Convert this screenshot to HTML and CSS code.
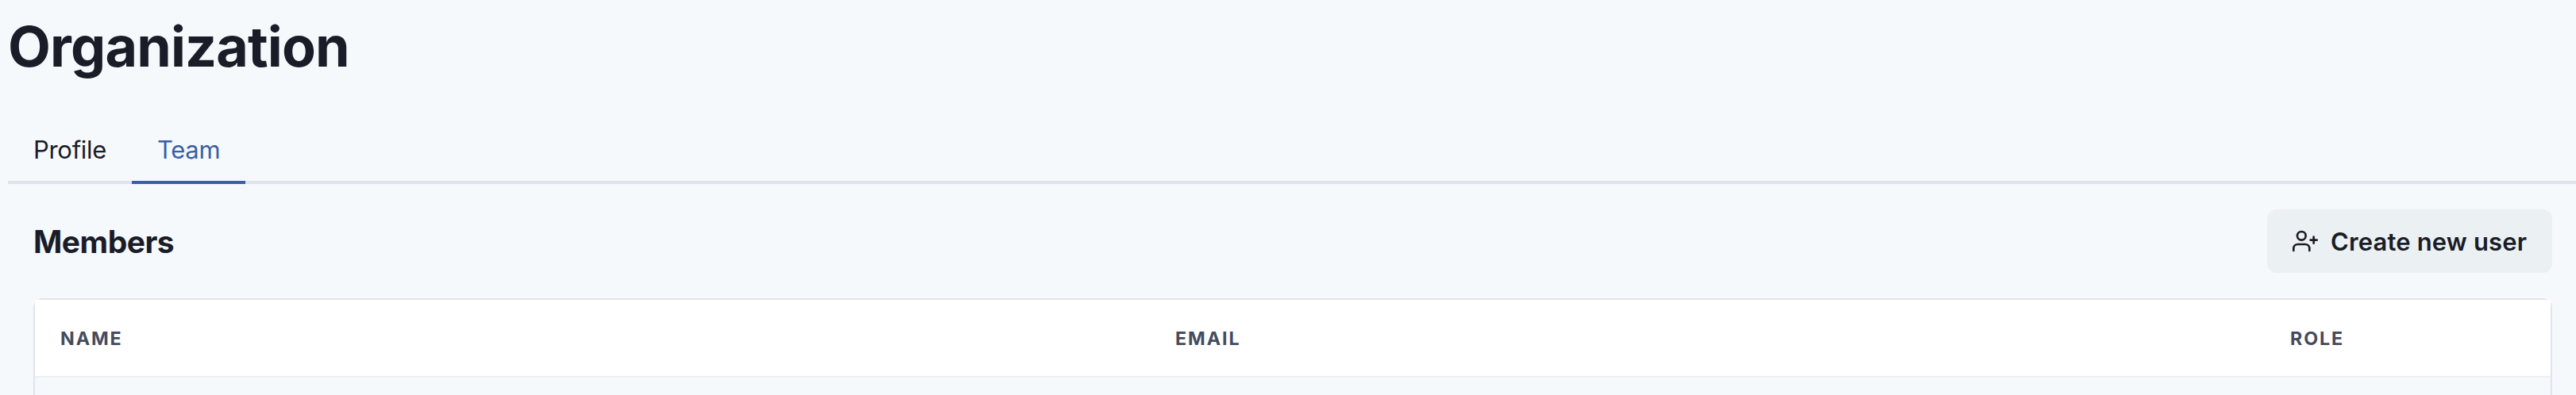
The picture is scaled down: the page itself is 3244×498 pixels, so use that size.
FILE: index.html
```
<!DOCTYPE html>
<html lang="en">
<head>
  <meta charset="UTF-8" />
  <meta name="viewport" content="width=device-width, initial-scale=1.0" />
  <title>Organization</title>
  <link rel="stylesheet" href="styles.css">
</head>
<body>
  <h1>Organization</h1>

  <div class="tabs" role="tablist">
    <button class="tab" role="tab">Profile</button>
    <button class="tab active" role="tab" aria-selected="true">Team</button>
  </div>

  <section class="panel">
    <div class="panel-header">
      <h2>Members</h2>
      <button class="btn">
        <svg class="icon" viewBox="0 0 24 24" fill="none" stroke="currentColor" stroke-width="2" stroke-linecap="round" stroke-linejoin="round">
          <path d="M16 21v-2a4 4 0 0 0-4-4H5a4 4 0 0 0-4 4v2" />
          <circle cx="8.5" cy="7" r="4" />
          <line x1="20" y1="8" x2="20" y2="14" />
          <line x1="23" y1="11" x2="17" y2="11" />
        </svg>
        <span>Create new user</span>
      </button>
    </div>

    <div class="table-wrap">
      <table>
        <thead>
          <tr>
            <th class="col-wide">Name</th>
            <th class="col-wide">Email</th>
            <th>Role</th>
          </tr>
        </thead>
      </table>
    </div>
  </section>
</body>
</html>
```

FILE: styles.css
```
* {
  box-sizing: border-box;
}
body {
  margin: 0;
  padding: 16px 0 0 10px;
  height: 498px;
  overflow: hidden;
  display: flex;
  flex-direction: column;
  background: #f5f9fc;
  color: #1a1c28;
  font-family: Inter, sans-serif;
  font-size: 31px;
  line-height: 48px;
}
h1 {
  margin: 0 0 46px;
  font-size: 70px;
  line-height: 86px;
  font-weight: 700;
  letter-spacing: -0.85px;
}
h2 {
  margin: 0;
  padding-top: 2px;
  font-size: 39px;
  line-height: 48px;
  font-weight: 700;
  letter-spacing: -0.5px;
}
button {
  border: 0;
  font: inherit;
  color: inherit;
  cursor: pointer;
}
.tabs {
  display: flex;
  border-bottom: 4px solid #e1e4ec;
}
.tab {
  width: 156px;
  margin-bottom: -4px;
  padding: 17px 32px 15px;
  background: none;
  border-bottom: 4px solid transparent;
  letter-spacing: -0.3px;
  text-align: left;
  white-space: nowrap;
}
.tab.active {
  width: 143px;
  color: #3a5fa7;
  border-color: #3a5fa7;
}
.panel {
  flex: 1;
  display: flex;
  flex-direction: column;
  padding: 32px 30px 0 32px;
}
.panel-header {
  display: flex;
  justify-content: space-between;
  align-items: center;
  margin-bottom: 32px;
}
.btn {
  display: flex;
  align-items: center;
  gap: 16px;
  width: 359px;
  height: 80px;
  padding: 0 0 0 32px;
  border-radius: 12px;
  background: #ebf0f3;
  font-weight: 600;
  letter-spacing: 0.15px;
  white-space: nowrap;
}
.btn span {
  padding-top: 2px;
}
.icon {
  width: 32px;
  height: 32px;
}
.table-wrap {
  flex: 1;
  border: 2px solid #e1e4ec;
  border-bottom: 0;
  border-radius: 12px 12px 0 0;
}
table {
  width: 100%;
  table-layout: fixed;
  border-collapse: separate;
  border-spacing: 0;
}
th {
  padding: 33px 32px 31px;
  background: #fff;
  border-bottom: 2px solid #ebf0f3;
  color: #454c5e;
  font-size: 23.3px;
  line-height: 32px;
  font-weight: 700;
  letter-spacing: 1.9px;
  text-align: left;
  text-transform: uppercase;
}
.col-wide {
  width: 1404px;
}
```
